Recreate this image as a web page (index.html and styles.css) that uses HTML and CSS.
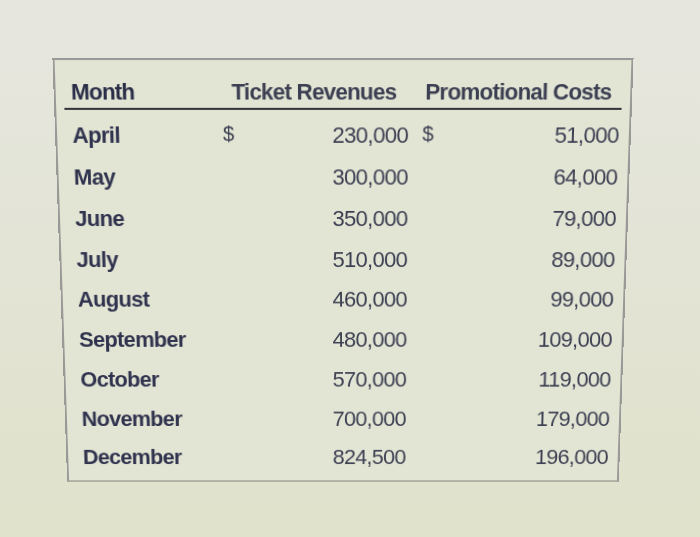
FILE: index.html
```html
<!DOCTYPE html>
<html>
<head>
<meta charset="utf-8">
<link rel="stylesheet" href="styles.css">
</head>
<body>
<div class="screen">
  <div class="table">
    <div class="head">
      <div class="c-month">Month</div>
      <div class="c-rev">Ticket Revenues</div>
      <div class="c-cost">Promotional Costs</div>
    </div>
    <div class="rows">
      <div class="row"><div class="c-month">April</div><div class="c-rev"><span class="cur">$</span><span>230,000</span></div><div class="c-cost"><span class="cur">$</span><span>51,000</span></div></div>
      <div class="row"><div class="c-month">May</div><div class="c-rev"><span class="cur"></span><span>300,000</span></div><div class="c-cost"><span class="cur"></span><span>64,000</span></div></div>
      <div class="row"><div class="c-month">June</div><div class="c-rev"><span class="cur"></span><span>350,000</span></div><div class="c-cost"><span class="cur"></span><span>79,000</span></div></div>
      <div class="row"><div class="c-month">July</div><div class="c-rev"><span class="cur"></span><span>510,000</span></div><div class="c-cost"><span class="cur"></span><span>89,000</span></div></div>
      <div class="row"><div class="c-month">August</div><div class="c-rev"><span class="cur"></span><span>460,000</span></div><div class="c-cost"><span class="cur"></span><span>99,000</span></div></div>
      <div class="row"><div class="c-month">September</div><div class="c-rev"><span class="cur"></span><span>480,000</span></div><div class="c-cost"><span class="cur"></span><span>109,000</span></div></div>
      <div class="row"><div class="c-month">October</div><div class="c-rev"><span class="cur"></span><span>570,000</span></div><div class="c-cost"><span class="cur"></span><span>119,000</span></div></div>
      <div class="row"><div class="c-month">November</div><div class="c-rev"><span class="cur"></span><span>700,000</span></div><div class="c-cost"><span class="cur"></span><span>179,000</span></div></div>
      <div class="row"><div class="c-month">December</div><div class="c-rev"><span class="cur"></span><span>824,500</span></div><div class="c-cost"><span class="cur"></span><span>196,000</span></div></div>
    </div>
  </div>
</div>
</body>
</html>
```
FILE: styles.css
```css
html, body {
  margin: 0;
  padding: 0;
}
body {
  width: 700px;
  height: 537px;
  overflow: hidden;
  background: linear-gradient(180deg, #e6e6df 0%, #e3e4d6 45%, #e0e2cb 100%);
  font-family: "Liberation Sans", Arial, sans-serif;
  color: #2c2f47;
}
.screen {
  padding: 62px 0 0 60px;
}
.table {
  width: 566px;
  height: 427px;
  box-sizing: border-box;
  border: 2px solid #999a97;
  border-bottom-color: #aeb0a4;
  background: #e3e5d4;
  padding: 0 8px;
  transform-origin: 50% 50%;
  transform: perspective(1000px) rotateX(-7deg);
}
.head {
  display: grid;
  grid-template-columns: 153px 186px 1fr;
  padding-top: 18px;
  padding-bottom: 2px;
  line-height: 26px;
  font-size: 22px;
  font-weight: bold;
  letter-spacing: -0.8px;
  border-bottom: 2px solid #34353d;
  color: #2a2d48;
}
.head .c-month {
  padding-left: 7px;
}
.head .c-rev,
.head .c-cost {
  justify-content: center;
}
.head .c-rev {
  padding-left: 0;
  padding-right: 3px;
}
.head .c-cost {
  padding-left: 4px;
}
.rows {
  padding-top: 5px;
}
.row {
  display: grid;
  grid-template-columns: 153px 184px 1fr;
  height: 40.75px;
  align-items: center;
  font-size: 22px;
  letter-spacing: -0.7px;
}
.row .c-month {
  font-weight: bold;
  padding-left: 7px;
  color: #30334e;
}
.c-rev,
.c-cost {
  display: flex;
  justify-content: space-between;
  color: #3c3f52;
}
.row .c-rev {
  padding-left: 2px;
}
.row .c-cost {
  padding-left: 14px;
  padding-right: 2px;
}
.cur {
  font-size: 20px;
}
```
